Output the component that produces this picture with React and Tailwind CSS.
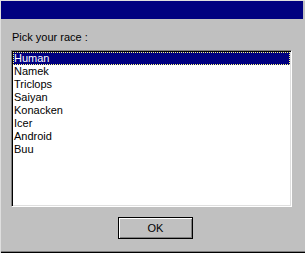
import React from 'react';

const RACES = ['Human', 'Namek', 'Triclops', 'Saiyan', 'Konacken', 'Icer', 'Android', 'Buu'];

function RaceRow({ name, selected }) {
  return (
    <div
      className={`h-[13px] leading-[13px] pl-[1px] whitespace-nowrap ${
        selected
          ? 'bg-[#000080] text-white outline-1 outline-dotted outline-[#ffff80] -outline-offset-1'
          : 'text-black'
      }`}
    >
      {name}
    </div>
  );
}

export default function App() {
  const selected = 0;

  return (
    <div className="w-[305px] h-[253px] bg-[#c0c0c0] border-t border-l border-[#dfdfdf] shadow-[inset_0_-1px_#000,inset_0_-2px_#808080] flex flex-col font-['Liberation_Sans',Arial,sans-serif] text-[11px] text-black">
      {/* title bar */}
      <div className="h-[18px] mr-[2px] bg-[#000080]" />

      <div className="mt-[12px] ml-[11px] leading-[13px]">Pick your race :</div>

      {/* list box */}
      <div className="mt-[6px] ml-[10px] w-[281px] h-[157px] bg-white p-[1px] border border-t-[#808080] border-l-[#808080] border-b-white border-r-white shadow-[inset_1px_1px_#000,inset_-1px_-1px_#dfdfdf]">
        {RACES.map((r, i) => (
          <RaceRow key={r} name={r} selected={i === selected} />
        ))}
      </div>

      {/* OK button */}
      <button className="mt-[10px] ml-[117px] w-[75px] h-[22px] bg-[#c0c0c0] border border-black shadow-[inset_1px_1px_#fff,inset_-1px_-1px_#808080] flex items-center justify-center leading-none">
        OK
      </button>
    </div>
  );
}
